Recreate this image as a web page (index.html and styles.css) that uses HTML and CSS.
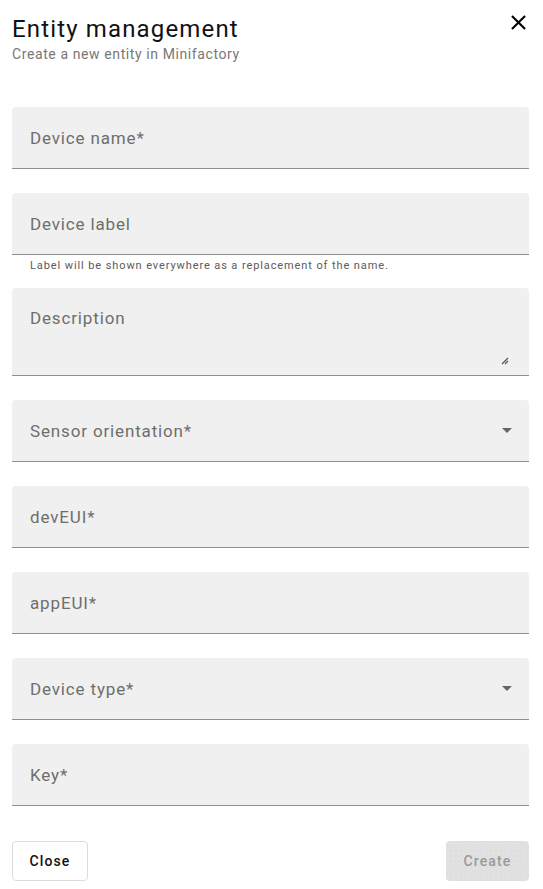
FILE: index.html
```html
<!DOCTYPE html>
<html lang="en">
<head>
<meta charset="utf-8">
<title>Entity management</title>
<link rel="stylesheet" href="styles.css">
</head>
<body>
<div class="dialog">
  <header class="dialog-header">
    <div class="titles">
      <h1 class="title">Entity management</h1>
      <p class="subtitle">Create a new entity in Minifactory</p>
    </div>
    <button class="close-icon" aria-label="Close">
      <svg viewBox="0 0 24 24" width="25" height="25"><path d="M19 6.41L17.59 5 12 10.59 6.41 5 5 6.41 10.59 12 5 17.59 6.41 19 12 13.41 17.59 19 19 17.59 13.41 12z" fill="#000"/></svg>
    </button>
  </header>

  <form class="form">
    <div class="field"><span class="label">Device name*</span></div>

    <div class="field"><span class="label">Device label</span></div>
    <div class="hint">Label will be shown everywhere as a replacement of the name.</div>

    <div class="field field-textarea">
      <span class="label">Description</span>
      <svg class="resize" viewBox="0 0 8 8" width="8" height="8"><path d="M7 1L1 7M7 4L4 7" stroke="#555" stroke-width="1.2" fill="none"/></svg>
    </div>

    <div class="field field-select"><span class="label">Sensor orientation*</span><span class="arrow"></span></div>

    <div class="field"><span class="label">devEUI*</span></div>

    <div class="field"><span class="label">appEUI*</span></div>

    <div class="field field-select"><span class="label">Device type*</span><span class="arrow"></span></div>

    <div class="field"><span class="label">Key*</span></div>
  </form>

  <footer class="actions">
    <button class="btn btn-outline" type="button">Close</button>
    <button class="btn btn-disabled" type="button" disabled>Create</button>
  </footer>
</div>
</body>
</html>
```

FILE: styles.css
```css
* { box-sizing: border-box; }

html, body {
  margin: 0;
  padding: 0;
  background: #fff;
}

body {
  font-family: Roboto, "Liberation Sans", Arial, sans-serif;
  color: #000;
}

.dialog {
  padding: 15px 14px 0 12px;
}

.dialog-header {
  display: flex;
  justify-content: space-between;
  align-items: flex-start;
}

.title {
  margin: 0;
  font-size: 24px;
  line-height: 28px;
  font-weight: 400;
  color: #111;
  letter-spacing: 1.15px;
}

.subtitle {
  margin: 1px 0 0;
  font-size: 14px;
  line-height: 20px;
  color: #787878;
  letter-spacing: 0.6px;
}

.close-icon {
  border: 0;
  background: none;
  padding: 0;
  margin: -5px -2px 0 0;
  width: 25px;
  height: 25px;
  display: flex;
}

.form {
  margin-top: 43px;
  display: flex;
  flex-direction: column;
}

.field {
  position: relative;
  height: 62px;
  background: #f0f0f0;
  border-bottom: 1px solid #8f8f8f;
  border-radius: 4px 4px 0 0;
  display: flex;
  align-items: center;
  padding: 0 18px;
  margin-bottom: 24px;
}

.label {
  font-size: 17px;
  color: #6e6e6e;
  letter-spacing: 0.85px;
  flex: 1;
}

.hint {
  margin: -21px 0 14px;
  padding-left: 18px;
  font-size: 11px;
  line-height: 16px;
  color: #5a5a5a;
  letter-spacing: 0.9px;
}

.field-textarea {
  height: 88px;
  align-items: flex-start;
  padding-top: 20px;
}

.resize {
  position: absolute;
  right: 20px;
  bottom: 10px;
}

.arrow {
  width: 0;
  height: 0;
  border-left: 5px solid transparent;
  border-right: 5px solid transparent;
  border-top: 5px solid #666;
  margin-right: -1px;
}

.actions {
  display: flex;
  justify-content: space-between;
  margin-top: 11px;
}

.btn {
  height: 40px;
  border-radius: 4px;
  font-family: Roboto, "Liberation Sans", Arial, sans-serif;
  font-size: 14px;
  font-weight: 500;
  letter-spacing: 1.1px;
}

.btn-outline {
  width: 76px;
  background: #fff;
  border: 1px solid #dcdcdc;
  color: #111;
}

.btn-disabled {
  width: 83px;
  border: 0;
  color: #9a9a9a;
  background-color: #e0e0e0;
  background-image: radial-gradient(circle, #ebebeb 0.6px, transparent 0.8px);
  background-size: 5px 5px;
}
```
